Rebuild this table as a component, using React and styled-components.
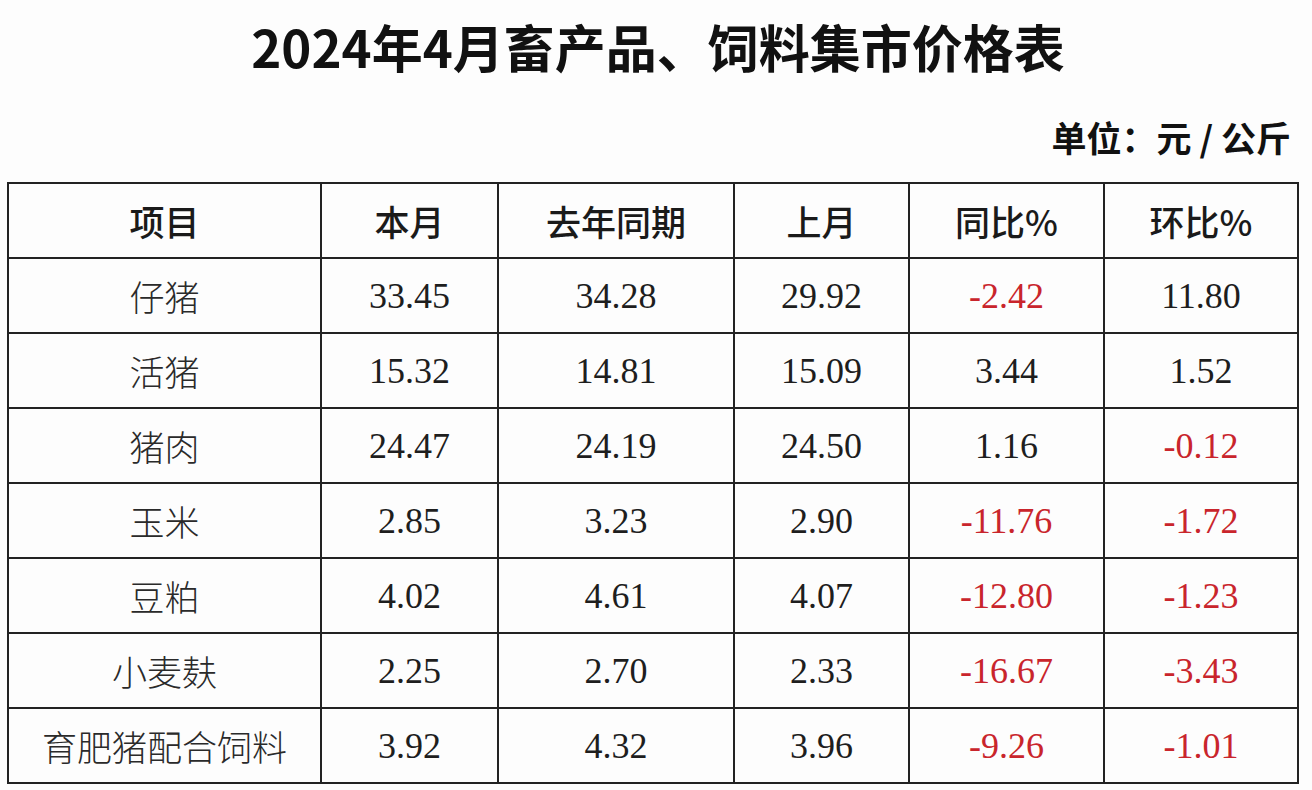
import React from "react";
import styled, { createGlobalStyle } from "styled-components";

const GlobalStyle = createGlobalStyle`
  html, body {
    margin: 0;
    padding: 0;
    background: #fdfdfd;
  }
`;

const columns = ["项目", "本月", "去年同期", "上月", "同比%", "环比%"];
const widths = [313, 177, 236, 175, 195, 194];

const rows = [
  ["仔猪", "33.45", "34.28", "29.92", "-2.42", "11.80"],
  ["活猪", "15.32", "14.81", "15.09", "3.44", "1.52"],
  ["猪肉", "24.47", "24.19", "24.50", "1.16", "-0.12"],
  ["玉米", "2.85", "3.23", "2.90", "-11.76", "-1.72"],
  ["豆粕", "4.02", "4.61", "4.07", "-12.80", "-1.23"],
  ["小麦麸", "2.25", "2.70", "2.33", "-16.67", "-3.43"],
  ["育肥猪配合饲料", "3.92", "4.32", "3.96", "-9.26", "-1.01"],
];

function App() {
  return (
    <Page>
      <GlobalStyle />
      <Title>2024年4月畜产品、饲料集市价格表</Title>
      <Unit>单位：元 / 公斤</Unit>
      <PriceTable>
        <colgroup>
          {widths.map((w, i) => (
            <col key={i} style={{ width: w }} />
          ))}
        </colgroup>
        <thead>
          <tr>
            {columns.map((c) => (
              <HeadCell key={c}>{c}</HeadCell>
            ))}
          </tr>
        </thead>
        <tbody>
          {rows.map((r) => (
            <tr key={r[0]}>
              <NameCell>{r[0]}</NameCell>
              {r.slice(1).map((v, i) => (
                <NumCell key={i} $negative={v.startsWith("-")}>
                  {v}
                </NumCell>
              ))}
            </tr>
          ))}
        </tbody>
      </PriceTable>
    </Page>
  );
}

export default App;

const Page = styled.div`
  width: 1312px;
  height: 790px;
  box-sizing: border-box;
  padding: 0 15px 0 7px;
  color: #1b1b1b;
  overflow: hidden;
`;

const Title = styled.h1`
  margin: 0;
  height: 92px;
  line-height: 92px;
  text-align: center;
  font-family: "Noto Sans CJK SC", sans-serif;
  font-weight: 700;
  font-size: 51px;
  color: #111;
  padding-left: 12px;
`;

const Unit = styled.div`
  margin-top: 28px;
  margin-bottom: 28px;
  height: 34px;
  line-height: 34px;
  text-align: right;
  padding-right: 6px;
  font-family: "Noto Sans CJK SC", sans-serif;
  font-weight: 700;
  font-size: 35px;
  color: #111;
`;

const PriceTable = styled.table`
  border-collapse: collapse;
  table-layout: fixed;
  width: 1290px;
  border: 2px solid #222;

  td,
  th {
    border: 2px solid #222;
    height: 73px;
    padding: 0;
    text-align: center;
    vertical-align: middle;
  }
`;

const HeadCell = styled.th`
  font-family: "Noto Sans CJK SC", sans-serif;
  font-weight: 500;
  font-size: 35px;
  color: #1a1a1a;
`;

const NameCell = styled.td`
  font-family: "Noto Sans CJK SC", sans-serif;
  font-weight: 300;
  font-size: 35px;
  color: #2a2a2a;
`;

const NumCell = styled.td`
  font-family: "Liberation Serif", serif;
  font-size: 36px;
  color: ${(p) => (p.$negative ? "#c9252c" : "#1e1e1e")};
`;
